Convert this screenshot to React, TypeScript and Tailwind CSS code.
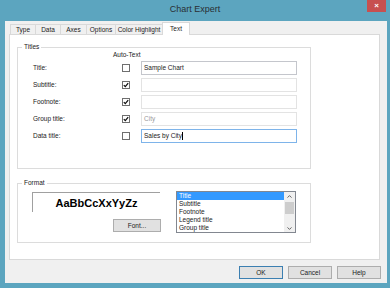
import React from 'react';

const tabs = [
  { name: 'Type', w: 'w-[25px]' },
  { name: 'Data', w: 'w-[25px]' },
  { name: 'Axes', w: 'w-[26px]' },
  { name: 'Options', w: 'w-[29px]' },
  { name: 'Color Highlight', w: 'w-[47px]' },
];

const titleRows = [
  { label: 'Title:', checked: false, value: 'Sample Chart', kind: 'normal' },
  { label: 'Subtitle:', checked: true, value: '', kind: 'disabled' },
  { label: 'Footnote:', checked: true, value: '', kind: 'disabled' },
  { label: 'Group title:', checked: true, value: 'City', kind: 'disabled' },
  { label: 'Data title:', checked: false, value: 'Sales by City', kind: 'focused' },
];

const listItems = ['Title', 'Subtitle', 'Footnote', 'Legend title', 'Group title'];

function CheckBox({ checked }: { checked: boolean }) {
  return (
    <div className="w-[8px] h-[8px] border border-[#6f6f6f] bg-white flex items-center justify-center">
      {checked && (
        <svg width="6" height="6" viewBox="0 0 6 6">
          <path d="M0.8 3.1 L2.3 4.6 L5.2 1.2" fill="none" stroke="#111" strokeWidth="1.3" />
        </svg>
      )}
    </div>
  );
}

function Chevron({ up }: { up?: boolean }) {
  return (
    <svg width="5" height="3" viewBox="0 0 5 3">
      <path d={up ? 'M0.5 2.6 L2.5 0.6 L4.5 2.6' : 'M0.5 0.4 L2.5 2.4 L4.5 0.4'} fill="none" stroke="#555" strokeWidth="0.9" />
    </svg>
  );
}

export default function App() {
  return (
    <div className="w-[390px] h-[288px] bg-[#5ca5bf] flex flex-col font-['Liberation_Sans',Arial,sans-serif] text-[6.5px] leading-[8px] text-[#1a1a1a]">
      {/* Title bar */}
      <div className="h-[21px] flex items-start">
        <div className="w-[23px]" />
        <div className="flex-1 text-center text-[9px] leading-[19px] text-[#2a2f33]">Chart Expert</div>
        <div className="w-[19px] h-[12px] mr-[4px] bg-[#c75050] flex items-center justify-center text-white text-[8px] font-bold leading-none">
          ×
        </div>
      </div>

      {/* Client area */}
      <div className="ml-[5px] mr-[3px] mb-[5px] flex-1 bg-[#f0f0f0] flex flex-col">
        {/* Tabs */}
        <div className="h-[13px] pl-[5px] flex items-end">
          {tabs.map((t) => (
            <div
              key={t.name}
              className={`${t.w} h-[10px] border-t border-l border-[#d9d9d9] bg-[#f0f0f0] flex items-center justify-center`}
            >
              {t.name}
            </div>
          ))}
          <div className="w-[28px] h-[13px] -mb-px relative z-10 border-t border-l border-r border-[#d9d9d9] bg-white flex justify-center pt-[2px]">
            Text
          </div>
        </div>

        {/* Panel */}
        <div className="ml-[4px] w-[371px] h-[226px] bg-white border border-[#d9d9d9] pl-[7px] pt-[8px]">
          {/* Titles */}
          <fieldset className="w-[294px] h-[126px] border border-[#dcdcdc]">
            <legend className="ml-[4px] px-[2px]">Titles</legend>
            <div className="pl-[95px] h-[8px]">Auto-Text</div>
            <div className="mt-[2px] flex flex-col gap-[3px]">
              {titleRows.map((r) => (
                <div key={r.label} className="h-[14px] flex items-center pl-[15px]">
                  <div className="w-[89px]">{r.label}</div>
                  <CheckBox checked={r.checked} />
                  <div
                    className={`ml-[11px] w-[156px] h-[14px] border bg-white flex items-center pl-[2px] ${
                      r.kind === 'focused'
                        ? 'border-[#7eb4ea]'
                        : r.kind === 'disabled'
                        ? 'border-[#e3e3e3] text-[#9a9a9a]'
                        : 'border-[#c4c6cc]'
                    }`}
                  >
                    {r.value}
                    {r.kind === 'focused' && <span className="w-px h-[8px] bg-black" />}
                  </div>
                </div>
              ))}
            </div>
          </fieldset>

          {/* Format */}
          <fieldset className="mt-[10px] w-[294px] h-[64px] border border-[#dcdcdc]">
            <legend className="ml-[4px] px-[2px]">Format</legend>
            <div className="pl-[14px] pt-[5px] flex items-start">
              <div className="w-[128px] flex flex-col items-end">
                <div className="w-[128px] h-[20px] border-t border-l border-[#a0a0a0] flex items-center justify-center text-[11px] font-bold text-black">
                  AaBbCcXxYyZz
                </div>
                <div className="mt-[7px] mr-[-1px] w-[48px] h-[13px] bg-[#e1e1e1] border border-[#adadad] flex items-center justify-center">
                  Font...
                </div>
              </div>
              <div className="ml-[16px] -mt-px w-[120px] h-[42px] border border-[#828790] bg-white flex">
                <div className="flex-1 flex flex-col">
                  {listItems.map((it, i) => (
                    <div
                      key={it}
                      className={`h-[8px] pl-[2px] ${i === 0 ? 'bg-[#3399ff] text-white' : ''}`}
                    >
                      {it}
                    </div>
                  ))}
                </div>
                <div className="w-[11px] bg-[#f0f0f0] flex flex-col items-center">
                  <div className="h-[8px] flex items-center">
                    <Chevron up />
                  </div>
                  <div className="mt-[2px] w-[9px] h-[12px] bg-[#cdcdcd]" />
                  <div className="flex-1" />
                  <div className="h-[8px] flex items-center">
                    <Chevron />
                  </div>
                </div>
              </div>
            </div>
          </fieldset>
        </div>

        {/* Buttons */}
        <div className="mt-[6px] h-[13px] flex justify-end gap-[5px] pr-[6px]">
          <div className="w-[44px] h-[13px] bg-[#e1e1e1] border border-[#3c7fb1] flex items-center justify-center">OK</div>
          <div className="w-[44px] h-[13px] bg-[#e1e1e1] border border-[#adadad] flex items-center justify-center">Cancel</div>
          <div className="w-[44px] h-[13px] bg-[#e1e1e1] border border-[#adadad] flex items-center justify-center">Help</div>
        </div>
      </div>
    </div>
  );
}
